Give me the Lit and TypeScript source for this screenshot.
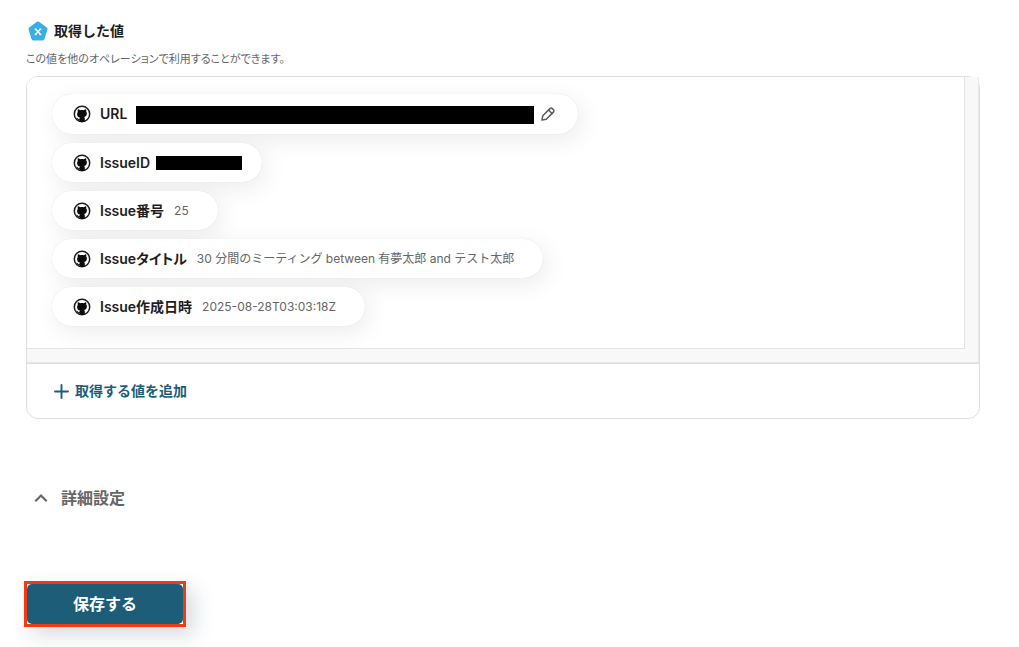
import { LitElement, html, css, nothing } from "lit";
import { customElement, state } from "lit/decorators.js";

interface OutputValue {
  label: string;
  value?: string;
  redacted?: "long" | "short";
  editable?: boolean;
}

const githubIcon = html`<svg class="github" viewBox="0 0 18 18" aria-hidden="true">
  <circle cx="9" cy="9" r="7.7" fill="#fff" stroke="#1d1d1f" stroke-width="1.5" />
  <path
    fill="#0b0b0c"
    d="M4.900 4.300c.9 0 1.600.4 2.200.9 1.200-.3 2.600-.3 3.800 0 .6-.5 1.300-.9 2.200-.9.3.8.3 1.500.1 2.100.5.6.7 1.300.7 2.200 0 1.900-1 3-2.700 3.400.4.4.6.9.6 1.600v3.100H6.400v-1.700c-1.300.3-1.900-.5-2.400-1.500-.2-.3-.4-.5-.7-.7.900-.3 1.500.3 1.900.9.300.4.700.6 1.200.5.1-.8.2-1.200.5-1.600-1.800-.4-2.800-1.500-2.800-3.400 0-.9.200-1.600.7-2.200-.2-.6-.2-1.900.1-2.700z"
  />
</svg>`;

const pencilIcon = html`<svg class="pencil" viewBox="0 0 16 16" aria-hidden="true">
  <g fill="none" stroke="#5c5c5c" stroke-width="1.500" stroke-linejoin="round" stroke-linecap="round">
    <path d="M2 14l.8-4.300 7.100-7.100a1.700 1.700 0 0 1 2.400 0l1.100 1.100a1.700 1.700 0 0 1 0 2.400l-7.100 7.100z" />
    <path d="M8.500 4l3.500 3.500" />
  </g>
</svg>`;

@customElement("value-pill")
export class ValuePill extends LitElement {
  static properties = { item: { attribute: false } };
  declare item: OutputValue;

  static styles = css`
    :host {
      display: block;
    }
    .pill {
      display: inline-flex;
      align-items: center;
      box-sizing: border-box;
      min-height: 39px;
      padding: 0 29px 0 21px;
      border-radius: 20px;
      background: #fff;
      box-shadow: 0 0 1px rgba(0, 0, 0, 0.14), 4px 6px 24px rgba(0, 0, 0, 0.08);
      vertical-align: top;
      white-space: nowrap;
    }
    .redacted {
      padding-right: 20px;
    }
    .editable {
      min-height: 40px;
    }
    .github {
      width: 18px;
      height: 18px;
      margin-right: 9px;
    }
    .label {
      font-size: 14px;
      line-height: 20px;
      font-weight: 600;
      font-feature-settings: "palt";
      color: #1d1d1f;
    }
    .value {
      margin-left: 10px;
      font-size: 12px;
      line-height: 20px;
      color: #666;
    }
    .mask {
      background: #000;
    }
    .long {
      width: 398px;
      height: 18px;
      margin: 2px 0 0 9px;
    }
    .short {
      width: 86px;
      height: 14px;
      margin-left: 6px;
    }
    .edit {
      display: flex;
      margin: 0 2px 0 6px;
      padding: 0;
      border: 0;
      background: none;
      cursor: pointer;
    }
    .pencil {
      width: 16px;
      height: 16px;
    }
  `;

  render() {
    const { label, value, redacted, editable } = this.item;
    return html`<div class="pill ${redacted ? "redacted" : ""} ${editable ? "editable" : ""}">
      ${githubIcon}<span class="label">${label}</span>
      ${value ? html`<span class="value">${value}</span>` : nothing}
      ${redacted ? html`<span class="mask ${redacted}"></span>` : nothing}
      ${editable
        ? html`<button class="edit" type="button" aria-label="${label}">${pencilIcon}</button>`
        : nothing}
    </div>`;
  }
}

@customElement("app-root")
export class AppRoot extends LitElement {
  @state() private open = true;

  private values: OutputValue[] = [
    { label: "URL", redacted: "long", editable: true },
    { label: "IssueID", redacted: "short" },
    { label: "Issue番号", value: "25" },
    { label: "Issueタイトル", value: "30 分間のミーティング between 有夢太郎 and テスト太郎" },
    { label: "Issue作成日時", value: "2025-08-28T03:03:18Z" },
  ];

  static styles = css`
    :host {
      display: block;
      box-sizing: border-box;
      padding: 20px 39px 0 26px;
      background: #fff;
      color: #1d1d1f;
      font-family: Inter, "Noto Sans CJK JP", sans-serif;
    }
    button {
      font-family: inherit;
      cursor: pointer;
    }
    .heading {
      display: flex;
      align-items: center;
      gap: 6px;
      margin: 0 0 0 2px;
      font-size: 14px;
      line-height: 22px;
      font-weight: 600;
    }
    .badge {
      width: 20px;
      height: 20px;
    }
    .note {
      margin: 8px 0;
      font-size: 11px;
      line-height: 18px;
      font-feature-settings: "palt";
      color: #666;
    }
    .card {
      border: 1px solid #dedede;
      border-radius: 12px;
    }
    .scroller {
      padding: 0 14px 14px 0;
      border-top-left-radius: 11px;
      background: #f8f8f8;
      border-bottom: 1px solid #dedede;
      box-shadow: inset -1px -1px 0 #e8e8e8;
    }
    .list {
      display: flex;
      flex-direction: column;
      gap: 9px;
      padding: 17px 24px 23px 25px;
      border-top-left-radius: 11px;
      background: #fff;
      box-shadow: inset -1px -1px 0 #e4e4e4;
      overflow: hidden;
    }
    .add {
      display: flex;
      align-items: center;
      gap: 6px;
      margin: 16px 27px;
      padding: 0;
      border: 0;
      background: none;
      color: #1d5d78;
      font-size: 14px;
      line-height: 22px;
      font-weight: 600;
    }
    .plus {
      width: 15px;
      height: 15px;
    }
    .toggle {
      display: flex;
      align-items: center;
      gap: 12px;
      margin: 67px 0 0 7px;
      padding: 0;
      border: 0;
      background: none;
      color: #666;
      font-size: 16px;
      line-height: 24px;
      font-weight: 600;
    }
    .chevron {
      width: 16px;
      height: 16px;
    }
    .actions {
      display: flex;
      margin: 71px 0 0 -2px;
      padding-bottom: 20px;
    }
    .focus {
      border: 3px solid #f13a12;
      box-shadow: 8px 8px 20px rgba(30, 60, 80, 0.18);
    }
    .save {
      display: block;
      padding: 8px 46px;
      border: 0;
      border-radius: 5px;
      background: #1d5d78;
      color: #fff;
      font-size: 16px;
      line-height: 24px;
      font-weight: 600;
    }
  `;

  render() {
    return html`
      <h2 class="heading">
        <svg class="badge" viewBox="0 0 20 20" aria-hidden="true">
          <path
            d="M10 2.300l7.700 5.700-2.900 9.600H5.200L2.300 8z"
            fill="#38aee6"
            stroke="#38aee6"
            stroke-width="3.600"
            stroke-linejoin="round"
          />
          <path d="M7.400 8l5.200 5.600M12.600 8l-5.200 5.600" stroke="#fff" stroke-width="1.500" />
          <path d="M6.500 8h2.200M11.300 8h2.200M6.500 13.700h2.200M11.300 13.700h2.200" stroke="#fff" stroke-width=".9" />
        </svg>
        取得した値
      </h2>
      <p class="note">この値を他のオペレーションで利用することができます。</p>
      <section class="card">
        <div class="scroller">
          <div class="list">
            ${this.values.map((item) => html`<value-pill .item=${item}></value-pill>`)}
          </div>
        </div>
        <button class="add" type="button">
          <svg class="plus" viewBox="0 0 15 15" aria-hidden="true">
            <path d="M7.500 1v13M1 7.500h13" stroke="currentColor" stroke-width="1.900" stroke-linecap="round" />
          </svg>
          取得する値を追加
        </button>
      </section>
      <button
        class="toggle"
        type="button"
        aria-expanded=${this.open}
        @click=${() => (this.open = !this.open)}
      >
        <svg class="chevron" viewBox="0 0 16 16" aria-hidden="true">
          <path
            d=${this.open ? "M2.300 11.200L8 5.500l5.700 5.700" : "M2.300 5.500L8 11.200l5.700-5.700"}
            fill="none"
            stroke="currentColor"
            stroke-width="2.200"
          />
        </svg>
        詳細設定
      </button>
      <div class="actions">
        <div class="focus"><button class="save" type="button">保存する</button></div>
      </div>
    `;
  }
}
